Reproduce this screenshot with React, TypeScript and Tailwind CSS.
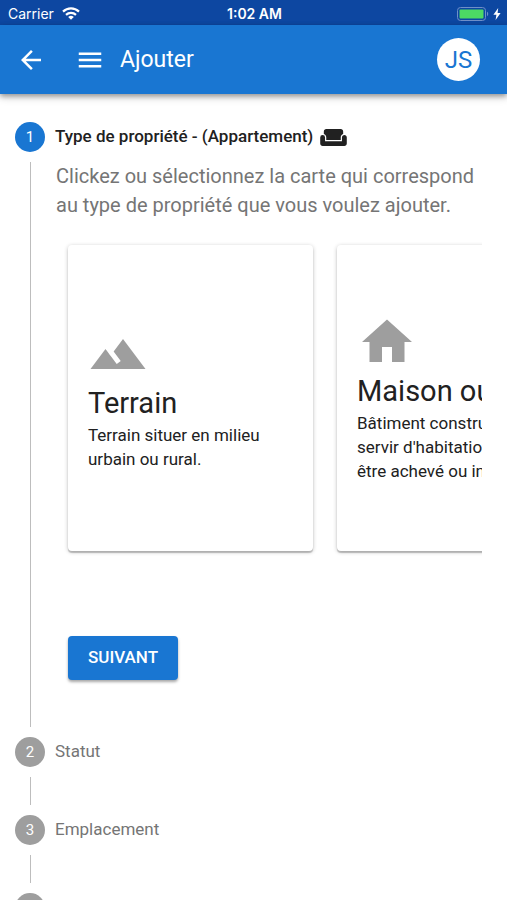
import { useState } from "react";
import type { ReactNode } from "react";
import type { IconType } from "react-icons";
import { MdArrowBack, MdHome, MdMenu, MdTerrain, MdWeekend } from "react-icons/md";
import clsx from "clsx";

type PropertyType = {
  id: string;
  title: string;
  lines: string[];
  icon: IconType;
};

const PROPERTY_TYPES: PropertyType[] = [
  {
    id: "terrain",
    title: "Terrain",
    lines: ["Terrain situer en milieu", "urbain ou rural."],
    icon: MdTerrain,
  },
  {
    id: "maison",
    title: "Maison ou villa",
    lines: ["Bâtiment construit pour", "servir d'habitation, peut", "être achevé ou inachevé."],
    icon: MdHome,
  },
];

const NEXT_STEPS = ["Statut", "Emplacement", "Détails"];

function StatusBar() {
  return (
    <div className="grid h-[25px] shrink-0 grid-cols-3 items-center bg-[#0d47a1] pt-0.5 pr-1.5 pl-2 font-[Inter,sans-serif] text-sm text-white">
      <div className="flex items-center gap-2">
        <span>Carrier</span>
        <svg width="18" height="13" viewBox="0 0 18 13" fill="none" stroke="white" strokeWidth="2.2" aria-hidden="true">
          <path d="M1 4.6a11.6 11.6 0 0 1 16 0" />
          <path d="M4 7.9a7.4 7.4 0 0 1 10 0" />
          <path d="M9 12.8 6.2 10a4 4 0 0 1 5.6 0z" fill="white" stroke="none" />
        </svg>
      </div>
      <span className="text-center font-semibold">1:02 AM</span>
      <div className="flex items-center justify-end gap-1">
        <svg width="32" height="14" viewBox="0 0 32 14" aria-hidden="true">
          <rect x="0.5" y="0.5" width="28" height="13" rx="3" fill="none" stroke="#6f8fc8" />
          <rect x="2.5" y="2.5" width="24" height="9" rx="1" fill="#4cd964" />
          <path d="M30 4.8c1.6.6 1.6 3.8 0 4.4z" fill="#6f8fc8" />
        </svg>
        <svg width="8" height="12" viewBox="0 0 8 12" fill="white" aria-hidden="true">
          <path d="M5.2 0 .4 6.8h3L2.6 12l5-7h-3z" />
        </svg>
      </div>
    </div>
  );
}

function AppBar() {
  return (
    <header className="z-10 flex h-[69px] shrink-0 items-center bg-[#1976d2] pr-[27px] pl-4 text-white shadow-[0_2px_5px_rgba(0,0,0,0.35),0_4px_8px_rgba(0,0,0,0.14)]">
      <button type="button" aria-label="Retour">
        <MdArrowBack size={30} />
      </button>
      <button type="button" aria-label="Menu" className="ml-[29px]">
        <MdMenu size={30} />
      </button>
      <h1 className="ml-[15px] flex-1 text-[23px] leading-8">Ajouter</h1>
      <div className="flex size-[43px] items-center justify-center rounded-full bg-white text-2xl text-[#1976d2]">
        JS
      </div>
    </header>
  );
}

function StepLabel({ index, active, children }: { index: number; active?: boolean; children: ReactNode }) {
  return (
    <div
      className={clsx(
        "flex h-[30px] items-center gap-2.5 text-[17px]",
        active ? "font-medium text-[#212121]" : "text-[#757575]",
      )}
    >
      <span
        className={clsx(
          "flex size-[30px] shrink-0 items-center justify-center rounded-full text-[15px] font-normal text-white",
          active ? "bg-[#1976d2]" : "bg-[#9e9e9e]",
        )}
      >
        {index}
      </span>
      {children}
    </div>
  );
}

function PropertyCard({
  type,
  selected,
  onSelect,
}: {
  type: PropertyType;
  selected: boolean;
  onSelect: () => void;
}) {
  const Icon = type.icon;

  return (
    <button
      type="button"
      aria-pressed={selected}
      onClick={onSelect}
      className="flex h-[306px] w-[245px] shrink-0 flex-col justify-center rounded-sm bg-white px-5 pb-0.5 text-left whitespace-nowrap text-[#212121] shadow-[0_2px_1px_rgba(0,0,0,0.2),0_1px_4px_rgba(0,0,0,0.24)]"
    >
      <Icon size={60} className="text-[#9e9e9e]" />
      <span className="text-[29px] leading-[39px]">{type.title}</span>
      {type.lines.map((line) => (
        <span key={line} className="text-[17px] leading-6">
          {line}
        </span>
      ))}
    </button>
  );
}

export default function App() {
  const [selected, setSelected] = useState("appartement");

  return (
    <div className="flex h-screen flex-col bg-white font-[Roboto,sans-serif]">
      <StatusBar />
      <AppBar />

      <main className="flex-1 overflow-y-auto [scrollbar-width:none]">
        <ol className="px-[15px] pt-7">
          <li>
            <StepLabel index={1} active>
              <span className="flex items-center gap-1.5">
                Type de propriété - (Appartement)
                <MdWeekend size={29} />
              </span>
            </StepLabel>

            {/* Active step content */}
            <div className="my-2.5 ml-[15px] border-l border-[#bdbdbd] pr-2.5 pb-[47px] pl-[25px]">
              <p className="text-xl leading-[29px] text-[#757575]">
                Clickez ou sélectionnez la carte qui correspond au type de propriété que vous voulez ajouter.
              </p>
              <div className="mt-5 flex gap-6 overflow-x-auto px-3 pt-[5px] pb-5 [scrollbar-width:none]">
                {PROPERTY_TYPES.map((type) => (
                  <PropertyCard
                    key={type.id}
                    type={type}
                    selected={selected === type.id}
                    onSelect={() => setSelected(type.id)}
                  />
                ))}
              </div>
              <button
                type="button"
                className="mt-[65px] ml-3 block h-11 rounded-sm bg-[#1976d2] px-5 text-[17px] font-medium text-white uppercase shadow-[0_2px_3px_rgba(0,0,0,0.35)]"
              >
                Suivant
              </button>
            </div>
          </li>

          {NEXT_STEPS.map((label, i) => (
            <li key={label}>
              <StepLabel index={i + 2}>{label}</StepLabel>
              {i < NEXT_STEPS.length - 1 && (
                <div className="my-2.5 ml-[15px] h-7 border-l border-[#bdbdbd]" />
              )}
            </li>
          ))}
        </ol>
      </main>
    </div>
  );
}
